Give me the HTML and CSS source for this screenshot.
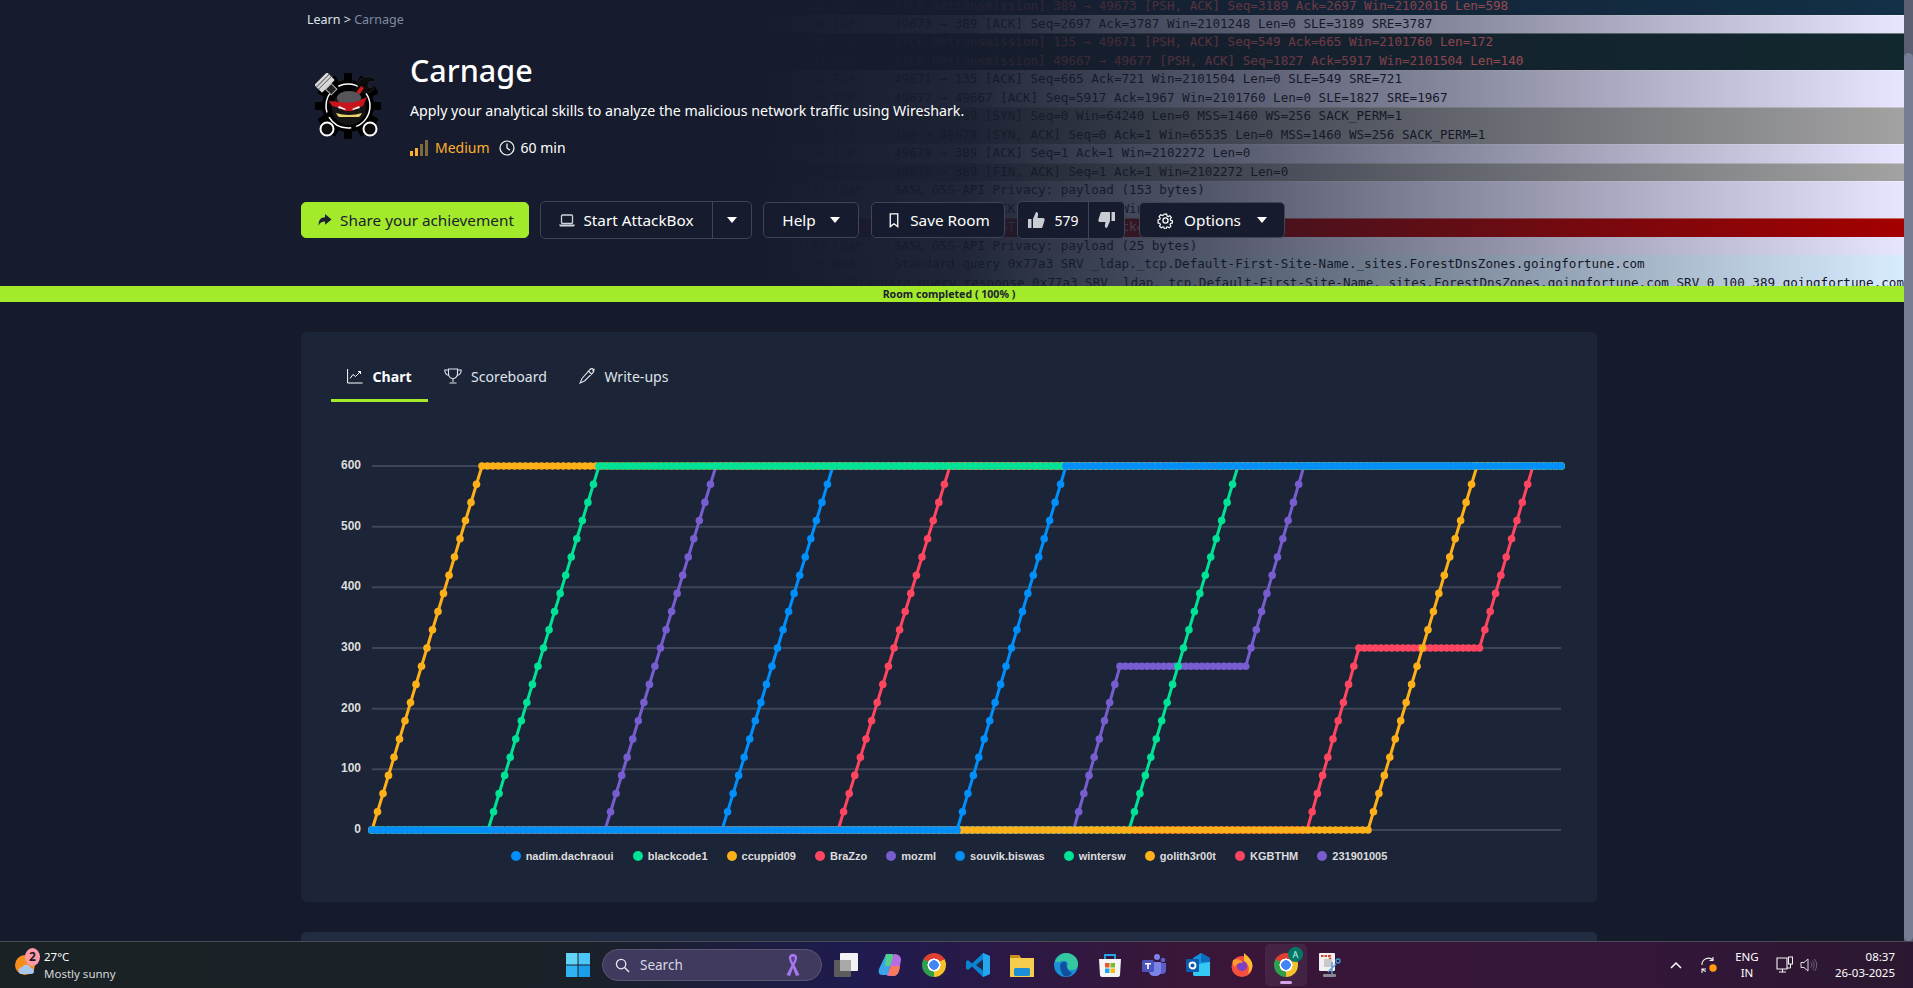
FILE: index.html
```html
<!DOCTYPE html>
<html lang="en">
<head>
    <meta charset="UTF-8">
    <meta name="viewport" content="width=device-width, initial-scale=1.0">
    <title>Carnage</title>
    <link rel="stylesheet" href="styles.css">
</head>
<body>
    <div class="browser">
        <div class="content">
            <section class="hero">
                <div class="capture">
                    <div class="pkt dark"><span class="pkt-len">69</span><span class="pkt-proto">TCP</span><span>[TCP Retransmission] 389 → 49673 [PSH, ACK] Seq=3189 Ack=2697 Win=2102016 Len=598</span></div>
                    <div class="pkt lav edge"><span class="pkt-len">66</span><span class="pkt-proto">TCP</span><span>49673 → 389 [ACK] Seq=2697 Ack=3787 Win=2101248 Len=0 SLE=3189 SRE=3787</span></div>
                    <div class="pkt dark edge"><span class="pkt-len">226</span><span class="pkt-proto">TCP</span><span>[TCP Retransmission] 135 → 49671 [PSH, ACK] Seq=549 Ack=665 Win=2101760 Len=172</span></div>
                    <div class="pkt dark"><span class="pkt-len">194</span><span class="pkt-proto">TCP</span><span>[TCP Retransmission] 49667 → 49677 [PSH, ACK] Seq=1827 Ack=5917 Win=2101504 Len=140</span></div>
                    <div class="pkt lav edge"><span class="pkt-len">66</span><span class="pkt-proto">TCP</span><span>49671 → 135 [ACK] Seq=665 Ack=721 Win=2101504 Len=0 SLE=549 SRE=721</span></div>
                    <div class="pkt lav"><span class="pkt-len">66</span><span class="pkt-proto">TCP</span><span>49677 → 49667 [ACK] Seq=5917 Ack=1967 Win=2101760 Len=0 SLE=1827 SRE=1967</span></div>
                    <div class="pkt grey edge"><span class="pkt-len">66</span><span class="pkt-proto">TCP</span><span>49678 → 389 [SYN] Seq=0 Win=64240 Len=0 MSS=1460 WS=256 SACK_PERM=1</span></div>
                    <div class="pkt grey"><span class="pkt-len">66</span><span class="pkt-proto">TCP</span><span>389 → 49678 [SYN, ACK] Seq=0 Ack=1 Win=65535 Len=0 MSS=1460 WS=256 SACK_PERM=1</span></div>
                    <div class="pkt lav edge"><span class="pkt-len">54</span><span class="pkt-proto">TCP</span><span>49678 → 389 [ACK] Seq=1 Ack=1 Win=2102272 Len=0</span></div>
                    <div class="pkt grey edge"><span class="pkt-len">54</span><span class="pkt-proto">TCP</span><span>49678 → 389 [FIN, ACK] Seq=1 Ack=1 Win=2102272 Len=0</span></div>
                    <div class="pkt lav edge"><span class="pkt-len">271</span><span class="pkt-proto">LDAP</span><span>SASL GSS-API Privacy: payload (153 bytes)</span></div>
                    <div class="pkt lav"><span class="pkt-len">54</span><span class="pkt-proto">TCP</span><span>389 → 49678 [ACK] Seq=1 Ack=2 Win=65535 Len=0</span></div>
                    <div class="pkt red edge"><span class="pkt-len">54</span><span class="pkt-proto">TCP</span><span>389 → 49678 [RST, ACK] Seq=1 Ack=2 Win=0 Len=0</span></div>
                    <div class="pkt lav"><span class="pkt-len">143</span><span class="pkt-proto">LDAP</span><span>SASL GSS-API Privacy: payload (25 bytes)</span></div>
                    <div class="pkt sky"><span class="pkt-len">128</span><span class="pkt-proto">DNS</span><span>Standard query 0x77a3 SRV _ldap._tcp.Default-First-Site-Name._sites.ForestDnsZones.goingfortune.com</span></div>
                    <div class="pkt sky"><span class="pkt-len">207</span><span class="pkt-proto">DNS</span><span>Standard query response 0x77a3 SRV _ldap._tcp.Default-First-Site-Name._sites.ForestDnsZones.goingfortune.com SRV 0 100 389 goingfortune.com</span></div>
                    <div class="capture-fade"></div>
                </div>
                <div class="hero-inner">
                    <div class="crumbs"><span class="crumb-link">Learn</span> &gt; <span class="crumb-here">Carnage</span></div>
                    <div class="room-head">
                        <svg class="room-logo" viewBox="0 0 66 66">
                            <g fill="#000">
                                <circle cx="33" cy="33" r="26"/>
                                <rect x="29" y="0" width="8" height="66" rx="1"/>
                                <rect x="0" y="29" width="66" height="8" rx="1"/>
                                <rect x="29" y="0" width="8" height="66" rx="1" transform="rotate(30 33 33)"/>
                                <rect x="29" y="0" width="8" height="66" rx="1" transform="rotate(60 33 33)"/>
                                <rect x="29" y="0" width="8" height="66" rx="1" transform="rotate(120 33 33)"/>
                                <rect x="29" y="0" width="8" height="66" rx="1" transform="rotate(150 33 33)"/>
                            </g>
                            <circle cx="33" cy="33" r="22" fill="none" stroke="#fff" stroke-width="1.500" stroke-dasharray="26 5"/>
                            <g transform="rotate(-45 12 12)">
                                <rect x="3" y="3" width="18" height="11" rx="1" fill="#d8d8d8"/>
                                <path d="M3 6h18M3 9h18" stroke="#6a6a6a" stroke-width="1"/>
                                <rect x="8" y="14" width="8" height="8" fill="#222" stroke="#bbb"/>
                            </g>
                            <path d="M46 6c6-4 13-2 15 2l-7 1-1 5 6 1c-2 5-8 6-12 4l-6 5-4-4 6-6c-1-3 0-6 3-8z" fill="#0b0b0b" stroke="#333" stroke-width=".5"/>
                            <path d="M49 15l-5 7-4-1 6-8z" fill="#d11a1a"/>
                            <circle cx="12" cy="56" r="6.500" fill="#0b0b0b" stroke="#fff" stroke-width="2"/>
                            <circle cx="55" cy="56" r="6.500" fill="#0b0b0b" stroke="#fff" stroke-width="2"/>
                            <circle cx="34" cy="35" r="17" fill="#151516"/>
                            <ellipse cx="34" cy="25" rx="12" ry="7" fill="#55555a"/>
                            <path d="M14 28l11 1c6 1 12 1 18-1l9-4-4 9-5 2-6 3-7 0-6-3-7-2z" fill="#c8141c"/>
                            <path d="M24 33l7 3-1 1-7-2zM44 33l-7 3 1 1 7-2z" fill="#f4f4f4"/>
                            <path d="M21 40c4 1 8 2 13 2s9-1 13-2c-1 2-2 3-3 4H24c-1-1-2-2-3-4z" fill="#e9d36a"/>
                        </svg>
                        <div class="room-text">
                            <h1 class="room-title">Carnage</h1>
                            <p class="room-desc">Apply your analytical skills to analyze the malicious network traffic using Wireshark.</p>
                            <div class="room-meta">
                                <svg class="meta-bars" viewBox="0 0 19 16">
                                    <rect x="0" y="11" width="3" height="5" fill="#ffb02e"/>
                                    <rect x="5" y="8" width="3" height="8" fill="#ffb02e"/>
                                    <rect x="10" y="4" width="3" height="12" fill="#7d6a3e"/>
                                    <rect x="15" y="0" width="3" height="16" fill="#7d6a3e"/>
                                </svg>
                                <span class="meta-level">Medium</span>
                                <svg class="meta-clock" viewBox="0 0 16 16"><circle cx="8" cy="8" r="7" fill="none" stroke="#fff" stroke-width="1.2"/><path d="M8 3.5V8l3 2.2" fill="none" stroke="#fff" stroke-width="1.2"/></svg>
                                <span>60 min</span>
                            </div>
                        </div>
                    </div>
                    <div class="actions">
                        <button class="btn btn-share">
                            <svg class="btn-icon" viewBox="0 0 14 14"><path d="M8 1l6 5-6 5V8C5 8 3 9 2 12 1.500 7 4 4 8 4z" fill="#1b2130"/></svg>
                            Share your achievement
                        </button>
                        <div class="btn-group btn-attack">
                            <button class="btn-part btn-part-main">
                                <svg class="btn-icon" viewBox="0 0 16 14"><rect x="2.500" y="1.500" width="11" height="8.500" rx="1" fill="none" stroke="#cfd3dc" stroke-width="1.300"/><path d="M0 11h16l-1 2H1z" fill="#cfd3dc"/></svg>
                                Start AttackBox
                            </button>
                            <button class="btn-part btn-part-caret"><span class="caret"></span></button>
                        </div>
                        <button class="btn btn-help">Help <span class="caret"></span></button>
                        <button class="btn btn-save">
                            <svg class="btn-icon" viewBox="0 0 12 16"><path d="M2 1h8v13.500l-4-3-4 3z" fill="none" stroke="#fff" stroke-width="1.400"/></svg>
                            Save Room
                        </button>
                        <div class="btn-group btn-like">
                            <button class="btn-part btn-part-up">
                                <svg class="thumb" viewBox="0 0 18 18"><path d="M1 8h3.500v9H1zM6 8l3-7c2 0 2.500 2 2 3.500L10.500 7H16c1.500 0 2 1.500 1.500 2.500l-2 6.500c-.3 1-1 1-2 1H6z" fill="#c9ccd3"/></svg>
                                579
                            </button>
                            <button class="btn-part btn-part-down">
                                <svg class="thumb" viewBox="0 0 18 18"><g transform="rotate(180 9 9)"><path d="M1 8h3.500v9H1zM6 8l3-7c2 0 2.500 2 2 3.500L10.500 7H16c1.500 0 2 1.500 1.500 2.500l-2 6.500c-.3 1-1 1-2 1H6z" fill="#c9ccd3"/></g></svg>
                            </button>
                        </div>
                        <button class="btn btn-options">
                            <svg class="gear" viewBox="0 0 16 16"><path d="M6.700 1h2.600l.4 2 1.300.6 1.800-1 1.700 2-1.200 1.700.3 1.400 2 .6v2.400l-2 .5-.6 1.300 1 1.800-1.900 1.800-1.700-1.100-1.300.5-.5 2H6.800l-.5-2-1.300-.5-1.700 1.100-1.900-1.800 1-1.800-.6-1.300-2-.5V7.300l2-.6.3-1.400L.9 3.600l1.700-2 1.800 1 1.300-.6z" transform="translate(1.200 1.200) scale(.85)" fill="none" stroke="#fff" stroke-width="1.300"/><circle cx="8" cy="8" r="2.400" fill="none" stroke="#fff" stroke-width="1.200"/></svg>
                            Options <span class="caret"></span>
                        </button>
                    </div>
                </div>
            </section>
            <div class="progress">Room completed ( 100% )</div>
            <main class="wrap">
                <section class="card">
                    <nav class="tabs">
                        <div class="tab tab-active">
                            <svg class="tab-icon" viewBox="0 0 16 16"><path d="M.6 1v14h15M3 10.500l3-4 2.500 2 5-5" fill="none" stroke="#fff" stroke-width="1"/><path d="M11 3.500h2.500V6" fill="none" stroke="#fff" stroke-width="1"/></svg>
                            Chart
                        </div>
                        <div class="tab">
                            <svg class="tab-icon tab-icon-wide" viewBox="0 0 18 16"><path d="M4.500 1h9v4.500c0 3-2 5-4.500 5s-4.500-2-4.500-5zM4.500 2H.8c0 3.500 1.500 5 4.200 5.500M13.500 2h3.700c0 3.500-1.500 5-4.200 5.500M9 10.500V14M5.500 15h7" fill="none" stroke="#dfe3ea" stroke-width="1.100"/></svg>
                            Scoreboard
                        </div>
                        <div class="tab">
                            <svg class="tab-icon" viewBox="0 0 16 16"><path d="M11 1.500c1-1 2.500-1 3.300-.2s.7 2.300-.3 3.300L5.500 13 1 15l2-4.500zM9.500 3l3.500 3.500M15.500 1l-2 2" fill="none" stroke="#dfe3ea" stroke-width="1.100"/></svg>
                            Write-ups
                        </div>
                    </nav>
                    <svg id="scoreChart" class="chart" viewBox="301 420 1296 425"></svg>
                    <div class="legend">
                        <span class="legend-item"><i class="dot c-blue"></i>nadim.dachraoui</span>
                        <span class="legend-item"><i class="dot c-green"></i>blackcode1</span>
                        <span class="legend-item"><i class="dot c-orange"></i>ccuppid09</span>
                        <span class="legend-item"><i class="dot c-red"></i>BraZzo</span>
                        <span class="legend-item"><i class="dot c-purple"></i>mozml</span>
                        <span class="legend-item"><i class="dot c-blue"></i>souvik.biswas</span>
                        <span class="legend-item"><i class="dot c-green"></i>wintersw</span>
                        <span class="legend-item"><i class="dot c-orange"></i>golith3r00t</span>
                        <span class="legend-item"><i class="dot c-red"></i>KGBTHM</span>
                        <span class="legend-item"><i class="dot c-purple"></i>231901005</span>
                    </div>
                </section>
                <section class="card card-next"></section>
            </main>
        </div>
        <div class="scrollbar"><div class="scroll-thumb"></div></div>
    </div>

    <footer class="taskbar">
        <div class="weather">
            <svg class="weather-sun" viewBox="0 0 20 26"><circle cx="10" cy="13" r="10" fill="#f58f1c"/><path d="M6 22a3.500 3.500 0 0 1 1-6.800 5 5 0 0 1 9 .8 3 3 0 0 1 0 6z" fill="#a9c8ee"/></svg>
            <span class="weather-badge">2</span>
            <div class="weather-text">
                <span>27°C</span>
                <span class="weather-sub">Mostly sunny</span>
            </div>
        </div>
        <div class="task-item">
            <svg class="task-svg" viewBox="0 0 24 24">
                <rect x="0" y="0" width="11.500" height="11.500" fill="#63d4f8"/>
                <rect x="12.500" y="0" width="11.500" height="11.500" fill="#4cc6f6"/>
                <rect x="0" y="12.500" width="11.500" height="11.500" fill="#2fb3f2"/>
                <rect x="12.500" y="12.500" width="11.500" height="11.500" fill="#1a9eea"/>
            </svg>
        </div>
        <div class="search">
            <svg class="search-icon" viewBox="0 0 16 16"><circle cx="6.500" cy="6.500" r="5" fill="none" stroke="#e8e8ef" stroke-width="1.400"/><path d="M10.200 10.200L15 15" stroke="#e8e8ef" stroke-width="1.500"/></svg>
            <span class="search-text">Search</span>
            <svg class="search-ribbon" viewBox="0 0 16 24"><path d="M8 1c3 0 4.500 2 4 5-.4 2.500-2 5-2.500 6l5 10-3.500 1L8 15l-3 8-3.500-1 5-10C6 11 4.400 8.500 4 6 3.500 3 5 1 8 1z" fill="#a678ec"/><path d="M8 3.500c1.500 0 2 1 1.800 2.500-.2 1-.8 2.300-1.800 3.800C7 8.300 6.400 7 6.200 6 6 4.500 6.500 3.500 8 3.500z" fill="#5b3f91"/></svg>
        </div>
        <div class="task-list">
            <div class="task-item"><svg class="task-svg" viewBox="0 0 24 24"><rect x="0" y="7" width="17" height="17" rx="1" fill="#5c5c5c"/><rect x="6" y="0" width="18" height="18" rx="1" fill="#f2f2f2"/><rect x="6" y="7" width="11" height="11" fill="#a9a9a9"/></svg></div>
            <div class="task-item"><svg class="task-svg" viewBox="0 0 24 24"><path d="M8 1h7l-5 21H4C1 22 0 19 1 16z" fill="#39a4e8"/><path d="M8 1h6c1 0 2 1 2 3l-2 9H7z" fill="#4fd18a"/><path d="M16 1c4 0 7 2 7 6l-2 11c-1 3-3 5-6 5H9l3-10z" fill="#b66de0"/><path d="M10 22l3-9h9l-1 5c-1 3-3 5-6 5z" fill="#f8795c"/></svg></div>
            <div class="task-item"><span class="chrome"></span></div>
            <div class="task-item"><svg class="task-svg" viewBox="0 0 24 24"><path d="M17 0l7 3v18l-7 3L6 13.500 2 17l-2-1.500v-7L2 7l4 3.500z" fill="#0a84d2"/><path d="M17 0l7 3v18l-7 3z" fill="#23a8ee"/><path d="M17 6.500L10 12l7 5.500z" fill="#1f2a4a"/></svg></div>
            <div class="task-item"><svg class="task-svg" viewBox="0 0 24 24"><path d="M0 2h9l2 3h13v19H0z" fill="#f6cd4d"/><path d="M0 2h9l1 3H0z" fill="#c98f12"/><rect x="4" y="15" width="16" height="8" rx="1.500" fill="#1c8fd6"/></svg></div>
            <div class="task-item"><svg class="task-svg" viewBox="0 0 24 24"><circle cx="12" cy="12" r="12" fill="#1b8fd8"/><path d="M1 9C3 3 8 0 12 0c6 0 12 4 12 11 0 5-4 6-7 6-2 0-4-1-4-3 0-1 1-2 1-3 0-2-2-3-4-3-4 0-7 2-9 1z" fill="#35c7a0"/><path d="M6 13c0-3 3-5 6-4 1 3 0 8 6 11-2 3-5 4-8 3-2-2-4-6-4-10z" fill="#0f4f9e"/></svg></div>
            <div class="task-item"><svg class="task-svg" viewBox="0 0 24 24"><path d="M1 6h22l-1 16c0 1-1 2-2 2H4c-1 0-2-1-2-2z" fill="#f5f5f5"/><path d="M7 6V2h10v4" fill="none" stroke="#29a8e8" stroke-width="1.800"/><rect x="7" y="10" width="4.500" height="4.500" fill="#e8562b"/><rect x="12.500" y="10" width="4.500" height="4.500" fill="#7bba2a"/><rect x="7" y="15.500" width="4.500" height="4.500" fill="#1ea2e8"/><rect x="12.500" y="15.500" width="4.500" height="4.500" fill="#fbb812"/></svg></div>
            <div class="task-item"><svg class="task-svg" viewBox="0 0 24 24"><circle cx="15" cy="4" r="3" fill="#7b83eb"/><circle cx="21" cy="7" r="2.300" fill="#5b5fc7"/><path d="M17 10h7v7c0 3-2 4-4 4h-3z" fill="#5b5fc7"/><path d="M7 9h12v9c0 3-2 5-6 5s-6-2-6-5z" fill="#7b83eb"/><rect x="0" y="7" width="12" height="12" rx="1.500" fill="#4b53bc"/><path d="M3 10h6v1.500H6.800V16H5.200v-4.500H3z" fill="#fff"/></svg></div>
            <div class="task-item"><svg class="task-svg" viewBox="0 0 24 24"><path d="M7 5l8-5 9 5v14c0 2-1 4-3 4H9c-1 0-2-1-2-2z" fill="#1490df"/><path d="M15 0l9 5v4h-9z" fill="#0f6cbd"/><path d="M7 12l17-3v14H9c-1 0-2-1-2-2z" fill="#35c8f2"/><rect x="0" y="6" width="13" height="13" rx="1" fill="#0b5cad"/><circle cx="6.500" cy="12.500" r="3" fill="none" stroke="#fff" stroke-width="1.800"/></svg></div>
            <div class="task-item"><svg class="task-svg" viewBox="0 0 24 24"><circle cx="12" cy="13.500" r="10.500" fill="#f5503f"/><path d="M14 0c2 2 8 6 8.500 12 0 4-2 7-5 9 3-5 1-11-3.500-13z" fill="#ffbd2e"/><circle cx="12" cy="13" r="5" fill="#7d3fc8"/><path d="M3 7c5-2 9 0 10 3-3-1-7 1-8 4-2-1-3-4-2-7z" fill="#ff9a2e"/></svg></div>
            <div class="task-item task-active">
                <span class="chrome"></span>
                <span class="profile-badge">A</span>
                <span class="task-pip"></span>
            </div>
            <div class="task-item"><svg class="task-svg" viewBox="0 0 24 24"><rect x="1" y="0" width="16" height="18" rx="1" fill="#f0f0f0"/><path d="M3 3h9v10" fill="none" stroke="#d8402e" stroke-width="2.200" stroke-dasharray="2.500 1"/><path d="M6 6h8v8H6z" fill="#c9c9c9"/><path d="M14 9v13M10 19l8-8" stroke="#5f9fd6" stroke-width="1.500"/><circle cx="20" cy="8" r="2" fill="none" stroke="#3d9be0" stroke-width="1.300"/><rect x="5" y="21" width="13" height="3" rx="1" fill="#8a8a92"/></svg></div>
        </div>
        <div class="tray">
            <svg class="tray-chevron" viewBox="0 0 12 8"><path d="M1 7l5-5 5 5" fill="none" stroke="#fff" stroke-width="1.500"/></svg>
            <svg class="tray-sync" viewBox="0 0 18 18"><path d="M2 9a6.500 6.500 0 0 1 11-5M13 1v3.500H9.500M2 12.500a6 6 0 0 0 4 3M2 17v-4h4" fill="none" stroke="#f2f2f2" stroke-width="1.100"/><circle cx="13" cy="12" r="3.700" fill="#ff9b0f"/></svg>
            <div class="tray-lang"><span>ENG</span><span>IN</span></div>
            <svg class="tray-net" viewBox="0 0 18 18"><path d="M1 2h10v11H1zM3 16h7M6.500 13v3" fill="none" stroke="#f5f5f5" stroke-width="1.100"/><rect x="12.500" y="1" width="4" height="7" fill="#2c1a34" stroke="#f5f5f5"/><path d="M14.500 8v4H11" fill="none" stroke="#f5f5f5"/></svg>
            <svg class="tray-sound" viewBox="0 0 18 16"><path d="M1 5.500h3l4-3.500v12l-4-3.500H1z" fill="none" stroke="#e0e0e0" stroke-width="1"/><path d="M10.500 5a4 4 0 0 1 0 6M12.500 3.500a7 7 0 0 1 0 9M14.500 2a10 10 0 0 1 0 12" fill="none" stroke="#6d6175" stroke-width="1"/></svg>
            <div class="clock"><span>08:37</span><span>26-03-2025</span></div>
        </div>
    </footer>
    <script src="chart.js"></script>
</body>
</html>
```

FILE: styles.css
```css
* {
    box-sizing: border-box;
}
html, body {
    margin: 0;
    height: 100%;
}
body {
    width: 1913px;
    height: 988px;
    overflow: hidden;
    background-color: #161b2b;
    color: #fff;
    font-family: "Noto Sans", sans-serif;
}
button {
    font: inherit;
    color: inherit;
    background: none;
    border: none;
    padding: 0;
}
.browser {
    display: flex;
    height: 941px;
}
.content {
    flex: 1;
    min-width: 0;
    overflow: hidden;
}
.scrollbar {
    width: 9px;
    background-color: #5a5e70;
    padding-top: 53px;
}
.scroll-thumb {
    height: 100%;
    border-radius: 5px;
    background-color: #767e96;
}

/* hero */
.hero {
    position: relative;
    height: 286px;
    overflow: hidden;
    background-color: #161c2d;
}
.capture {
    position: absolute;
    left: 757px;
    right: 0;
    top: -3.5px;
    font-family: "DejaVu Sans Mono", monospace;
    font-size: 12.6px;
    white-space: nowrap;
}
.capture-fade {
    position: absolute;
    inset: 0;
    background: linear-gradient(to right, rgba(22, 28, 45, 1) 0, rgba(22, 28, 45, 0.95) 18%, rgba(22, 28, 45, 0.68) 42%, rgba(22, 28, 45, 0) 100%);
}
.pkt {
    display: flex;
    height: 18.47px;
    line-height: 18.47px;
    color: #14141f;
    overflow: hidden;
}
.edge {
    box-shadow: inset 0 1px 0 rgba(255, 255, 255, 0.4);
}
.pkt-len {
    width: 69px;
    text-align: right;
    margin-right: 7px;
}
.pkt-proto {
    width: 61px;
}
.dark {
    background-color: #12282f;
    color: #f06a6a;
}
.dark:first-child {
    background-color: #123046;
}
.lav {
    background-color: #e7e5ff;
}
.grey {
    background-color: #a2a2a2;
}
.red {
    background-color: #a40000;
    color: #cfc4c4;
}
.sky {
    background-color: #d8ecff;
}
.hero-inner {
    position: relative;
    width: 1296px;
    margin-left: 301px;
}
.crumbs {
    padding: 11px 0 0 6px;
    font-size: 12.500px;
    line-height: 18px;
    color: #dfe3ea;
}
.crumb-here {
    color: #7f8aa3;
}
.room-head {
    display: flex;
    align-items: center;
    margin-top: 21px;
}
.room-logo {
    width: 66px;
    height: 66px;
    margin: 4px 29px 0 14px;
    flex: none;
}
.room-title {
    margin: 0;
    font-size: 30.500px;
    line-height: 40px;
    font-weight: 500;
}
.room-desc {
    margin: 11px 0 0;
    font-size: 14.200px;
    line-height: 20px;
}
.room-meta {
    display: flex;
    align-items: center;
    margin-top: 17px;
    font-size: 14px;
    line-height: 20px;
}
.meta-bars {
    width: 19px;
    height: 16px;
    margin-right: 6px;
}
.meta-level {
    color: #ffb02e;
    margin-right: 9px;
}
.meta-clock {
    width: 16px;
    height: 16px;
    margin-right: 6px;
}
.actions {
    display: flex;
    align-items: center;
    height: 38px;
    margin-top: 43px;
    font-size: 15.300px;
}
.btn {
    display: flex;
    align-items: center;
    justify-content: center;
    gap: 8px;
    height: 36px;
    border: 1px solid #3e4557;
    border-radius: 5px;
    background-color: #161c2d;
}
.btn-share {
    width: 228px;
    margin-right: 11px;
    background-color: #a3ea2a;
    border-color: #a3ea2a;
    color: #1b2130;
}
.btn-icon {
    width: 16px;
    height: 15px;
    flex: none;
}
.btn-group {
    display: flex;
    border: 1px solid #3e4557;
    border-radius: 5px;
    background-color: #161c2d;
}
.btn-attack {
    width: 212px;
    height: 38px;
    margin-right: 11px;
}
.btn-part {
    display: flex;
    align-items: center;
    justify-content: center;
    gap: 8px;
}
.btn-part-main {
    width: 172px;
    border-right: 1px solid #3e4557;
}
.btn-part-caret {
    flex: 1;
}
.caret {
    display: inline-block;
    width: 0;
    height: 0;
    margin-left: 6px;
    border-left: 5.500px solid transparent;
    border-right: 5.500px solid transparent;
    border-top: 6px solid #fff;
}
.btn-part-caret .caret {
    margin-left: 0;
}
.btn-help {
    width: 96px;
    margin-right: 12px;
}
.btn-save {
    width: 134px;
    margin-right: 12px;
}
.btn-like {
    width: 108px;
    height: 38px;
    margin-right: 14px;
    font-size: 14px;
}
.btn-part-up {
    width: 71px;
    border-right: 1px solid #3e4557;
    gap: 9px;
}
.btn-part-down {
    flex: 1;
}
.thumb {
    width: 18px;
    height: 18px;
}
.btn-options {
    width: 146px;
    gap: 10px;
}
.gear {
    width: 17px;
    height: 17px;
}
.progress {
    height: 16px;
    padding-right: 6px;
    background-color: #a3ea2a;
    color: #1b2130;
    font-size: 10.600px;
    font-weight: 700;
    line-height: 16px;
    text-align: center;
}

/* card + tabs */
.wrap {
    width: 1296px;
    margin-left: 301px;
    padding-top: 30px;
}
.card {
    height: 570px;
    padding-top: 20px;
    border-radius: 5px;
    background-color: #1c2538;
}
.card-next {
    margin-top: 30px;
    background-color: #212b42;
}
.tabs {
    display: flex;
    padding-left: 30px;
    font-size: 14.100px;
}
.tab {
    display: flex;
    align-items: center;
    gap: 9.500px;
    height: 50px;
    padding: 1px 16px 0;
    border-bottom: 3px solid transparent;
    color: #dfe3ea;
}
.tab-active {
    border-bottom-color: #a3ea2a;
    color: #fff;
    font-weight: 700;
}
.tab-icon {
    width: 16px;
    height: 16px;
}
.tab-icon-wide {
    width: 18px;
}

/* chart */
.chart {
    display: block;
    width: 1296px;
    height: 425px;
    margin-top: 18px;
}
.grid-line {
    stroke: #3e4557;
    stroke-width: 2;
}
.axis-label {
    fill: #dcdcdc;
    font-family: "Liberation Sans", Arial, sans-serif;
    font-size: 12px;
    font-weight: 700;
    text-anchor: end;
}
.legend {
    display: flex;
    justify-content: center;
    gap: 19px;
    height: 20px;
    padding-top: 1px;
    font-family: "Liberation Sans", Arial, sans-serif;
    font-size: 11px;
    font-weight: 700;
    line-height: 20px;
    color: #dcdcdc;
}
.legend-item {
    display: flex;
    align-items: center;
    gap: 5px;
}
.dot {
    width: 10px;
    height: 10px;
    border-radius: 50%;
}
.c-blue { background-color: #008ffb; }
.c-green { background-color: #00e396; }
.c-orange { background-color: #feb019; }
.c-red { background-color: #ff4560; }
.c-purple { background-color: #775dd0; }

/* taskbar */
.taskbar {
    display: flex;
    align-items: center;
    height: 47px;
    border-top: 1px solid #4a4a55;
    background: linear-gradient(to right, #1b2225 0, #1a2128 30%, #1f1b50 45%, #3a1638 62%, #34163a 85%, #2b1830 100%);
    font-size: 11.500px;
}
.weather {
    position: relative;
    display: flex;
    width: 556px;
    padding-left: 44px;
}
.weather-sun {
    position: absolute;
    left: 15px;
    top: 4px;
    width: 20px;
    height: 26px;
}
.weather-badge {
    position: absolute;
    left: 25px;
    top: 0;
    width: 15px;
    height: 18px;
    border-radius: 50%;
    background-color: #ff9aa8;
    color: #20161c;
    font-size: 12px;
    font-weight: 700;
    line-height: 18px;
    text-align: center;
}
.weather-text {
    display: flex;
    flex-direction: column;
    line-height: 17px;
}
.weather-sub {
    color: #d6d8da;
}
.task-item {
    position: relative;
    display: flex;
    align-items: center;
    justify-content: center;
    flex: none;
    width: 44px;
    height: 40px;
}
.task-svg {
    width: 24px;
    height: 24px;
}
.task-list {
    display: flex;
    margin-left: 2px;
}
.search {
    display: flex;
    align-items: center;
    flex: none;
    width: 220px;
    height: 32px;
    margin-left: 2px;
    padding: 0 20px 0 12px;
    border: 1px solid #5a5670;
    border-radius: 16px;
    background-color: #3f3a5e;
    font-size: 13.500px;
}
.search-icon {
    width: 15px;
    height: 15px;
}
.search-text {
    margin-left: 10px;
    flex: 1;
    color: #d8d8e4;
}
.search-ribbon {
    width: 16px;
    height: 24px;
}
.chrome {
    width: 24px;
    height: 24px;
    border-radius: 50%;
    background:
        radial-gradient(circle, #4285f4 0 27%, #fff 29% 38%, transparent 39%),
        conic-gradient(from -60deg, #e0402f 0 120deg, #f6c22a 120deg 240deg, #2f9e4d 240deg);
}
.task-active {
    width: 40px;
    margin: 0 2px;
    border-radius: 4px;
    background-color: rgba(255, 255, 255, 0.06);
    outline: 1px solid rgba(255, 255, 255, 0.07);
}
.profile-badge {
    position: absolute;
    right: 3px;
    top: 2px;
    width: 15px;
    height: 15px;
    border-radius: 50%;
    background-color: #00796b;
    color: #d5efe9;
    font-size: 9px;
    line-height: 15px;
    text-align: center;
}
.task-pip {
    position: absolute;
    left: 14px;
    bottom: 1px;
    width: 12px;
    height: 3px;
    border-radius: 2px;
    background-color: #d8a6e6;
}
.tray {
    display: flex;
    align-items: center;
    margin-left: auto;
    padding-right: 18px;
    font-size: 11.500px;
}
.tray-chevron {
    width: 12px;
    height: 8px;
    margin-right: 18px;
}
.tray-sync {
    width: 18px;
    height: 18px;
    margin-right: 14px;
}
.tray-lang {
    display: flex;
    flex-direction: column;
    align-items: center;
    width: 30px;
    margin-right: 14px;
    line-height: 16px;
}
.tray-net {
    width: 18px;
    height: 18px;
    margin-right: 6px;
}
.tray-sound {
    width: 18px;
    height: 16px;
    margin-right: 17px;
}
.clock {
    display: flex;
    flex-direction: column;
    align-items: flex-end;
    line-height: 16px;
}
```

FILE: chart.js
```js
const svg = document.getElementById('scoreChart');
const NS = 'http://www.w3.org/2000/svg';

const Y_ZERO = 830;
const Y_STEP = 0.6067;
const X_START = 372;
const X_END = 1561;
const DX = 5.42;

const colors = { blue: '#008ffb', green: '#00e396', orange: '#feb019', red: '#ff4560', purple: '#775dd0' };

// [x, score] corners of each line, in draw order (last one ends up on top)
const series = [
    ['red', [[1307, 0], [1359, 300], [1479.5, 300], [1533, 600]]],
    ['purple', [[1073.5, 0], [1120, 270], [1245.7, 270], [1304, 600]]],
    ['green', [[1129, 0], [1238, 600]]],
    ['purple', [[605, 0], [716, 600]]],
    ['blue', [[722, 0], [833, 600]]],
    ['red', [[838, 0], [950, 600]]],
    ['orange', [[1368, 0], [1477, 600]]],
    ['orange', [[X_START, 0], [482, 600]]],
    ['green', [[488, 0], [599, 600]]],
    ['blue', [[957, 0], [1066, 600]]]
];

function add(tag, attrs, text) {
    const el = document.createElementNS(NS, tag);
    Object.keys(attrs).forEach(key => el.setAttribute(key, attrs[key]));
    if (text !== undefined) el.textContent = text;
    svg.appendChild(el);
    return el;
}

function yOf(score) {
    return Y_ZERO - score * Y_STEP;
}

for (let score = 0; score <= 600; score += 100) {
    add('line', { class: 'grid-line', x1: 372, x2: 1561, y1: yOf(score), y2: yOf(score) });
    add('text', { class: 'axis-label', x: 361, y: yOf(score) + 3 }, score);
}

series.forEach(([color, corners]) => {
    const pts = [[X_START, 0], ...corners, [X_END, 600]];
    const dots = [];
    for (let i = 0; i < pts.length - 1; i++) {
        const [x1, s1] = pts[i];
        const [x2, s2] = pts[i + 1];
        const steps = s1 === s2 ? Math.max(1, Math.round((x2 - x1) / DX)) : Math.abs(s2 - s1) / 30;
        for (let k = 0; k < steps; k++) {
            dots.push([x1 + (x2 - x1) * k / steps, s1 + (s2 - s1) * k / steps]);
        }
    }
    dots.push([X_END, 600]);

    add('polyline', {
        points: pts.map(p => p[0] + ',' + yOf(p[1])).join(' '),
        fill: 'none',
        stroke: colors[color],
        'stroke-width': 3
    });
    dots.forEach(d => add('circle', { cx: d[0], cy: yOf(d[1]), r: 3.8, fill: colors[color] }));
});
```
